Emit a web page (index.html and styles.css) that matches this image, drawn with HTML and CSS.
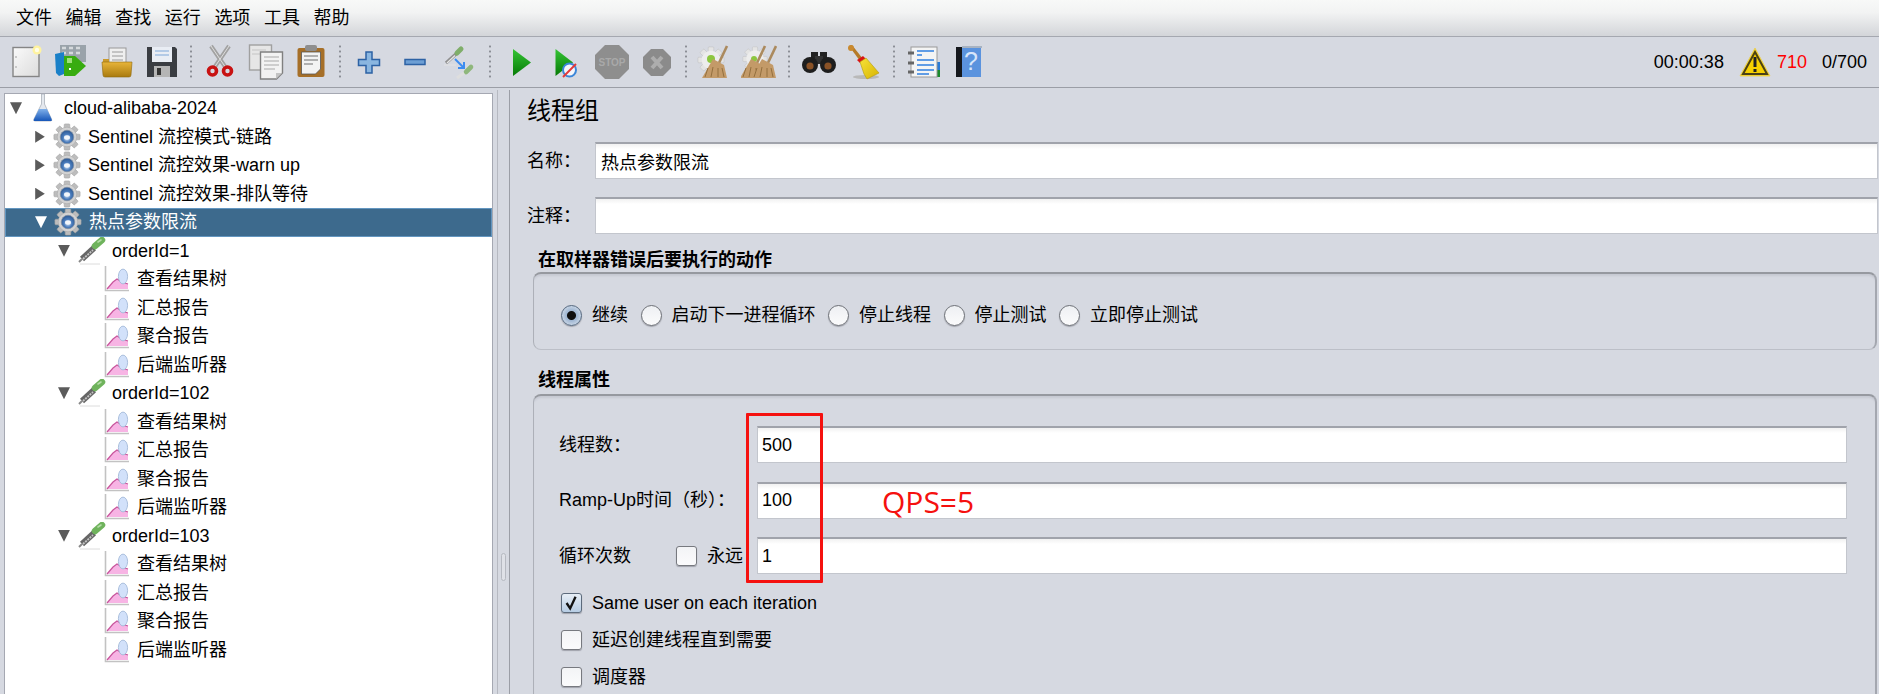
FILE: index.html
```html
<!DOCTYPE html>
<html lang="zh-CN">
<head>
  <meta charset="UTF-8">
  <title>JMeter - cloud-alibaba-2024</title>
  <link rel="stylesheet" href="styles.css">
</head>
<body>
  <!-- shared icons -->
  <svg class="icon-defs" aria-hidden="true">
    <defs>
      <linearGradient id="paper" x1="0" y1="0" x2="1" y2="1"><stop offset="0" stop-color="#fafafa"/><stop offset="1" stop-color="#dcdcdc"/></linearGradient>
      <linearGradient id="folder" x1="0" y1="0" x2="0" y2="1"><stop offset="0" stop-color="#e8b53a"/><stop offset="1" stop-color="#a97a0e"/></linearGradient>
      <linearGradient id="go" x1="0" y1="0" x2="0" y2="1"><stop offset="0" stop-color="#35c435"/><stop offset="1" stop-color="#067a06"/></linearGradient>
      <linearGradient id="liquid" x1="0" y1="0" x2="0" y2="1"><stop offset="0" stop-color="#7fb0ea"/><stop offset="1" stop-color="#1656b8"/></linearGradient>
      <radialGradient id="ball" cx="0.5" cy="0.6" r="0.6"><stop offset="0" stop-color="#d8e6f8"/><stop offset="0.5" stop-color="#4a7cbc"/><stop offset="1" stop-color="#2a5690"/></radialGradient>
      <linearGradient id="yellow" x1="0" y1="0" x2="1" y2="1"><stop offset="0" stop-color="#f6e23a"/><stop offset="1" stop-color="#d8b400"/></linearGradient>

      <symbol id="i-gear" viewBox="0 0 30 30">
        <g fill="#bdbdbd" stroke="#a2a2a2" stroke-width="0.6">
          <rect x="12" y="1" width="6" height="28" rx="1"/>
          <rect x="12" y="1" width="6" height="28" rx="1" transform="rotate(45 15 15)"/>
          <rect x="12" y="1" width="6" height="28" rx="1" transform="rotate(90 15 15)"/>
          <rect x="12" y="1" width="6" height="28" rx="1" transform="rotate(135 15 15)"/>
        </g>
        <circle cx="15" cy="15" r="10.5" fill="#d2d2d2" stroke="#a8a8a8" stroke-width="0.6"/>
        <circle cx="15" cy="15" r="7.2" fill="url(#ball)" stroke="#7d8ba0" stroke-width="0.8"/>
        <ellipse cx="15" cy="15.5" rx="3.2" ry="2.4" fill="#f2f6fb"/>
      </symbol>
      <symbol id="i-dropper" viewBox="0 0 30 28">
        <path d="M4 27h20" stroke="#dcdcdc" stroke-width="1"/>
        <path d="M3 25l3-3" stroke="#888" stroke-width="2"/>
        <path d="M6 22L18 11" stroke="#666" stroke-width="6"/>
        <path d="M7 22L17 13" stroke="#c4c4c4" stroke-width="1.8" stroke-dasharray="2 1"/>
        <path d="M19 9l7-6" stroke="#6fb35c" stroke-width="6.5" stroke-linecap="round"/>
        <path d="M22 5l3-2" stroke="#b5dca8" stroke-width="1.6" stroke-linecap="round"/>
      </symbol>
      <symbol id="i-chart" viewBox="0 0 30 28">
        <path d="M4.500 1v24.500H28" fill="none" stroke="#c2c2c2" stroke-width="1.6"/>
        <path d="M6 24l6-7 4-3 5 3 6 2v5z" fill="#f7b4e4"/>
        <path d="M6 24l6-7 4-3 5 3 6 2" fill="none" stroke="#c8559c" stroke-width="1.2"/>
        <ellipse cx="22" cy="11.500" rx="4.600" ry="7.400" fill="#d2e1fa" stroke="#9db4d4" stroke-width="0.8"/>
      </symbol>
      <symbol id="i-broom" viewBox="0 0 36 36">
        <path d="M31 2L22 21" stroke="#ab8a5e" stroke-width="2.6"/>
        <path d="M17 15l11 6 3 13H6z" fill="#c39a68"/>
        <path d="M12 24l-3 9M17 23l-2 10M22 24l0 9M26 24l2 9" stroke="#94703f" stroke-width="1"/>
      </symbol>
      <symbol id="i-cleargear" viewBox="0 0 30 30">
        <g fill="#e4e4e4" stroke="#bcbcbc" stroke-width="0.5">
          <rect x="12" y="1" width="6" height="28" rx="1"/>
          <rect x="12" y="1" width="6" height="28" rx="1" transform="rotate(45 15 15)"/>
          <rect x="12" y="1" width="6" height="28" rx="1" transform="rotate(90 15 15)"/>
          <rect x="12" y="1" width="6" height="28" rx="1" transform="rotate(135 15 15)"/>
        </g>
        <circle cx="15" cy="15" r="10" fill="#ededed"/>
      </symbol>
    </defs>
  </svg>

  <nav class="menubar">
    <span class="menu-item">文件</span>
    <span class="menu-item">编辑</span>
    <span class="menu-item">查找</span>
    <span class="menu-item">运行</span>
    <span class="menu-item">选项</span>
    <span class="menu-item">工具</span>
    <span class="menu-item">帮助</span>
  </nav>

  <div class="toolbar">
    <span class="tool"><svg viewBox="0 0 36 36"><rect x="5" y="3.5" width="26" height="29" fill="url(#paper)" stroke="#858585" stroke-width="1.4"/><circle cx="8" cy="13" r="1" fill="#bbb"/><circle cx="8" cy="23" r="1" fill="#bbb"/><circle cx="29" cy="6" r="4.5" fill="#fff3a0"/><circle cx="29" cy="6" r="2.2" fill="#fffde8"/></svg></span>
    <span class="tool"><svg viewBox="0 0 36 36"><rect x="7" y="1" width="26" height="17" fill="#9aa3aa"/><path d="M9 4h4M16 4h4M23 4h4M9 9h4M16 9h4M23 9h4" stroke="#d5d9dc" stroke-width="2.4"/><path d="M2 10l9-2v22l-5 2-3-3z" fill="#1a80c8"/><path d="M11 12h11l11 10-11 10H11z" fill="#38ac10"/><rect x="14" y="14" width="5" height="5" fill="#9fe07a"/><path d="M16 25h2" stroke="#fff" stroke-width="2"/></svg></span>
    <span class="tool"><svg viewBox="0 0 36 36"><rect x="10" y="4" width="17" height="18" fill="#efefef" stroke="#999"/><path d="M13 8h11M13 12h11M13 16h11" stroke="#9a9a9a"/><path d="M4 15h6v4H4z" fill="#c99a2c"/><path d="M3 18h30l-1 13q0 2-2 2H6q-2 0-2-2z" fill="url(#folder)" stroke="#8f680c" stroke-width="0.6"/></svg></span>
    <span class="tool"><svg viewBox="0 0 36 36"><path d="M3 3h28l2 2v28H3z" fill="#3a3d42"/><rect x="8" y="3" width="20" height="15" fill="#e9edf4"/><path d="M11 7h14M11 11h14" stroke="#7ea7d8" stroke-width="1.2"/><rect x="10" y="22" width="16" height="11" fill="#b5b5b5"/><rect x="13" y="24" width="4" height="7" fill="#333"/></svg></span>
    <span class="tool-sep"></span>
    <span class="tool"><svg viewBox="0 0 36 36"><path d="M9 2l15 22M27 2L12 24" stroke="#a2a2a2" stroke-width="4.2"/><path d="M9 2l15 22M27 2L12 24" stroke="#dedede" stroke-width="1"/><circle cx="10.5" cy="27" r="4" fill="none" stroke="#c81212" stroke-width="3.6"/><circle cx="25.5" cy="27" r="4" fill="none" stroke="#c81212" stroke-width="3.6"/></svg></span>
    <span class="tool"><svg viewBox="0 0 36 36"><rect x="1.5" y="1" width="22" height="25" fill="#e6e6e6" stroke="#a0a0a0" stroke-width="1.4"/><path d="M4 6h14M4 10h8" stroke="#c4c4c4"/><path d="M12.5 8h22v21l-6 6h-16z" fill="#f2f2f2" stroke="#808080" stroke-width="1.4"/><path d="M16 13h15M16 17h15M16 21h15M16 25h11" stroke="#a8a8a8"/><path d="M28 35v-6h6z" fill="#c4c4c4"/></svg></span>
    <span class="tool"><svg viewBox="0 0 36 36"><rect x="4.5" y="4" width="27" height="29" rx="2" fill="#a66f28"/><path d="M8.5 8h19v17l-5 5h-14z" fill="#f3f3f3" stroke="#555" stroke-width="0.8"/><rect x="12" y="1" width="12" height="6" rx="2" fill="#8e8e8e"/><path d="M11 12h14M11 16h14M11 20h9" stroke="#9a9a9a" stroke-width="1.5"/></svg></span>
    <span class="tool-sep"></span>
    <span class="tool"><svg viewBox="0 0 36 36"><path d="M15 8h6v7.5h7.5v6H21V29h-6v-7.5H7.5v-6H15z" fill="#8ab6e0" stroke="#2d62a4" stroke-width="1.5"/></svg></span>
    <span class="tool"><svg viewBox="0 0 36 36"><rect x="8" y="15.5" width="20" height="5" fill="#6d9fd4" stroke="#2d62a4" stroke-width="1.5"/></svg></span>
    <span class="tool"><svg viewBox="0 0 36 36"><path d="M4 19L14 10" stroke="#8f8f8f" stroke-width="3.4"/><path d="M5 19L13 11.5" stroke="#e8e8e8" stroke-width="1.2"/><path d="M15 9l4-4" stroke="#7fae6a" stroke-width="5" stroke-linecap="round"/><path d="M2 21h12" stroke="#e3e3e3"/><path d="M13 15l8 8" stroke="#3c8cf0" stroke-width="2"/><path d="M22 18v6h-6" fill="none" stroke="#3c8cf0" stroke-width="2"/><path d="M24 28l5-5" stroke="#8fb77c" stroke-width="4.6" stroke-linecap="round"/><path d="M15 34l7-5" stroke="#dedede" stroke-width="3"/></svg></span>
    <span class="tool-sep sep-run"></span>
    <span class="tool"><svg viewBox="0 0 36 36"><path d="M10 5l18 13.5L10 32z" fill="url(#go)"/></svg></span>
    <span class="tool"><svg viewBox="0 0 36 36"><path d="M7.5 5L25 18.5 7.5 32z" fill="url(#go)"/><circle cx="21.5" cy="26" r="6.5" fill="#f4f6fa" stroke="#3c86d8" stroke-width="2"/><path d="M15 33l13-13" stroke="#e23a3a" stroke-width="2"/></svg></span>
    <span class="tool"><svg viewBox="0 0 36 36"><path d="M11 1h14l10 10v14L25 35H11L1 25V11z" fill="#8e8e8e"/><text class="stop-text" x="18" y="22">STOP</text></svg></span>
    <span class="tool"><svg viewBox="0 0 36 36"><path d="M12 5h12l8 8v11l-8 8H12l-8-8V13z" fill="#8b8b8b"/><path d="M13 13l10 11M23 13L13 24" stroke="#adadad" stroke-width="4"/></svg></span>
    <span class="tool-sep sep-narrow"></span>
    <span class="tool"><svg viewBox="0 0 36 36"><use href="#i-cleargear" width="28" height="28" x="1" y="2"/><circle cx="15" cy="15" r="4" fill="#8cc63f"/><use href="#i-broom"/></svg></span>
    <span class="tool"><svg viewBox="0 0 36 36"><use href="#i-cleargear" width="26" height="26" x="1" y="2"/><circle cx="13" cy="15" r="3" fill="#8cc63f"/><use href="#i-broom" x="-7"/><use href="#i-broom" x="4"/></svg></span>
    <span class="tool-sep tool-sep-wide"></span>
    <span class="tool"><svg viewBox="0 0 36 36"><rect x="10" y="8" width="7" height="8" fill="#222"/><rect x="19" y="8" width="7" height="8" fill="#222"/><rect x="14" y="12" width="8" height="8" fill="#333"/><circle cx="9" cy="21" r="8" fill="#1e1e1e"/><circle cx="27" cy="21" r="8" fill="#1e1e1e"/><circle cx="9" cy="22" r="3.6" fill="#8a5226"/><circle cx="27" cy="22" r="3.6" fill="#8a5226"/></svg></span>
    <span class="tool"><svg viewBox="0 0 36 36"><ellipse cx="20" cy="33" rx="13" ry="2" fill="#b9b9b9"/><path d="M3 2l3-1 11 14-3 2z" fill="#b57a28"/><circle cx="5" cy="4" r="3" fill="#c98a30"/><path d="M11 16l6-4 3 3-6 4z" fill="#d81414"/><path d="M14 18l6-4 13 15-12 6-3-5z" fill="url(#yellow)" stroke="#b39a10" stroke-width="0.6"/></svg></span>
    <span class="tool-sep tool-sep-wide"></span>
    <span class="tool"><svg viewBox="0 0 36 36"><rect x="31" y="18" width="3" height="8" fill="#2b7bd6"/><rect x="31" y="26" width="3" height="7" fill="#1c8a2c"/><rect x="5" y="3" width="26" height="30" fill="#f4f4f4" stroke="#9a9a9a"/><path d="M2 9h6M2 19h6M2 28h6" stroke="#666" stroke-width="3"/><path d="M11 7h17M11 11h5M11 16h17M11 21h17M11 26h17M11 30h12" stroke="#2f7fe0" stroke-width="1.3"/></svg></span>
    <span class="tool"><svg viewBox="0 0 36 36"><rect x="5" y="3" width="25" height="30" fill="#5b93de"/><rect x="5" y="3" width="6" height="30" fill="#15181d"/><rect x="11" y="2" width="20" height="2" fill="#a8b3c2"/><text class="help-text" x="20" y="26">?</text></svg></span>
    <div class="status">
      <span class="status-time">00:00:38</span>
      <svg class="warn-icon" viewBox="0 0 32 30"><path d="M16 1L31 29H1z" fill="#f6d000" stroke="#e8d060" stroke-width="1"/><path d="M16 5L28 27H4z" fill="none" stroke="#4a4116" stroke-width="2"/><path d="M16 10v10" stroke="#222" stroke-width="3"/><path d="M16 22v3" stroke="#222" stroke-width="3"/></svg>
      <span class="status-errors">710</span>
      <span class="status-threads">0/700</span>
    </div>
  </div>

  <div class="main">
    <div class="tree-pane">
      <div class="tree-row depth-0"><span class="twist open"></span><svg class="node-icon" viewBox="0 0 30 28"><path d="M13.5 0h3v10l7 15q1 2-1 2H7q-2 0-1-2l7.5-15z" fill="#e4e8ee" stroke="#a0a8b2" stroke-width="0.7"/><path d="M11 15h8l4.500 10q1 2-1 2H7q-2 0-1-2z" fill="url(#liquid)"/></svg><span class="node-label">cloud-alibaba-2024</span></div>

      <div class="tree-row depth-1"><span class="twist closed"></span><svg class="node-icon"><use href="#i-gear"/></svg><span class="node-label">Sentinel 流控模式-链路</span></div>
      <div class="tree-row depth-1"><span class="twist closed"></span><svg class="node-icon"><use href="#i-gear"/></svg><span class="node-label">Sentinel 流控效果-warn up</span></div>
      <div class="tree-row depth-1"><span class="twist closed"></span><svg class="node-icon"><use href="#i-gear"/></svg><span class="node-label">Sentinel 流控效果-排队等待</span></div>
      <div class="tree-row depth-1 selected"><span class="twist open"></span><svg class="node-icon"><use href="#i-gear"/></svg><span class="node-label">热点参数限流</span></div>

      <div class="tree-row depth-2"><span class="twist open"></span><svg class="node-icon"><use href="#i-dropper"/></svg><span class="node-label">orderId=1</span></div>
      <div class="tree-row leaf"><svg class="node-icon"><use href="#i-chart"/></svg><span class="node-label">查看结果树</span></div>
      <div class="tree-row leaf"><svg class="node-icon"><use href="#i-chart"/></svg><span class="node-label">汇总报告</span></div>
      <div class="tree-row leaf"><svg class="node-icon"><use href="#i-chart"/></svg><span class="node-label">聚合报告</span></div>
      <div class="tree-row leaf"><svg class="node-icon"><use href="#i-chart"/></svg><span class="node-label">后端监听器</span></div>

      <div class="tree-row depth-2"><span class="twist open"></span><svg class="node-icon"><use href="#i-dropper"/></svg><span class="node-label">orderId=102</span></div>
      <div class="tree-row leaf"><svg class="node-icon"><use href="#i-chart"/></svg><span class="node-label">查看结果树</span></div>
      <div class="tree-row leaf"><svg class="node-icon"><use href="#i-chart"/></svg><span class="node-label">汇总报告</span></div>
      <div class="tree-row leaf"><svg class="node-icon"><use href="#i-chart"/></svg><span class="node-label">聚合报告</span></div>
      <div class="tree-row leaf"><svg class="node-icon"><use href="#i-chart"/></svg><span class="node-label">后端监听器</span></div>

      <div class="tree-row depth-2"><span class="twist open"></span><svg class="node-icon"><use href="#i-dropper"/></svg><span class="node-label">orderId=103</span></div>
      <div class="tree-row leaf"><svg class="node-icon"><use href="#i-chart"/></svg><span class="node-label">查看结果树</span></div>
      <div class="tree-row leaf"><svg class="node-icon"><use href="#i-chart"/></svg><span class="node-label">汇总报告</span></div>
      <div class="tree-row leaf"><svg class="node-icon"><use href="#i-chart"/></svg><span class="node-label">聚合报告</span></div>
      <div class="tree-row leaf"><svg class="node-icon"><use href="#i-chart"/></svg><span class="node-label">后端监听器</span></div>
    </div>

    <div class="splitter"><span class="splitter-grip"></span></div>

    <div class="detail">
      <h1 class="detail-title">线程组</h1>

      <div class="name-row">
        <label class="name-label">名称：</label>
        <input class="field" type="text" value="热点参数限流">
      </div>
      <div class="name-row">
        <label class="name-label">注释：</label>
        <input class="field" type="text" value="">
      </div>

      <h2 class="group-title">在取样器错误后要执行的动作</h2>
      <div class="group-box action-box">
        <span class="radio checked"></span><span class="option-label">继续</span>
        <span class="radio"></span><span class="option-label">启动下一进程循环</span>
        <span class="radio"></span><span class="option-label">停止线程</span>
        <span class="radio"></span><span class="option-label">停止测试</span>
        <span class="radio"></span><span class="option-label">立即停止测试</span>
      </div>

      <h2 class="group-title group-title-props">线程属性</h2>
      <div class="group-box props-box">
        <div class="prop-row">
          <label class="prop-label">线程数：</label>
          <input class="field num-field" type="text" value="500">
        </div>
        <div class="prop-row">
          <label class="prop-label">Ramp-Up时间（秒）：</label>
          <input class="field num-field" type="text" value="100">
        </div>
        <div class="prop-row loop-row">
          <div class="prop-label loop-label">
            <span class="loop-text">循环次数</span>
            <span class="check"></span><span class="option-label">永远</span>
          </div>
          <input class="field num-field" type="text" value="1">
        </div>

        <div class="check-row">
          <span class="check checked"><svg viewBox="0 0 21 20"><path d="M5 10l4 6 6-13" fill="none" stroke="#111" stroke-width="2.6"/></svg></span>
          <span class="option-label">Same user on each iteration</span>
        </div>
        <div class="check-row">
          <span class="check"></span><span class="option-label">延迟创建线程直到需要</span>
        </div>
        <div class="check-row">
          <span class="check"></span><span class="option-label">调度器</span>
        </div>

        <!-- red markup drawn over the form -->
        <div class="markup-box"></div>
        <div class="markup-text">QPS=5</div>
      </div>
    </div>
  </div>
</body>
</html>
```

FILE: styles.css
```css
* {
  box-sizing: border-box;
}
html, body {
  height: 100%;
}
body {
  margin: 0;
  overflow: hidden;
  background: #d6d9e1;
  color: #000;
  font-family: "Liberation Sans", "Noto Sans CJK SC", sans-serif;
  font-size: 18px;
  line-height: 20px;
}
.icon-defs {
  position: absolute;
  width: 0;
  height: 0;
}

/* menu */
.menubar {
  display: flex;
  align-items: center;
  gap: 13.6px;
  height: 37px;
  padding-left: 16px;
  background: linear-gradient(#f8f9f8 0, #f2f3f3 35%, #d3d5d9 100%);
  border-bottom: 1px solid #a5a8b0;
}

/* toolbar */
.toolbar {
  display: flex;
  align-items: center;
  height: 51px;
  padding-left: 3px;
  border-bottom: 1px solid #9b9ea6;
}
.tool {
  display: flex;
  justify-content: center;
  width: 45.5px;
}
.tool svg {
  width: 36px;
  height: 36px;
}
.stop-text {
  font-size: 10px;
  font-weight: bold;
  fill: #a9a9a9;
  text-anchor: middle;
}
.help-text {
  font-size: 25px;
  fill: #d8e6fa;
  text-anchor: middle;
}
.tool-sep {
  width: 12.5px;
  height: 36px;
  background: radial-gradient(circle, #8b8e96 1px, transparent 1.2px) center top / 2px 5px repeat-y;
}
.sep-run {
  width: 15px;
  background-position: 6px 0;
}
.sep-narrow {
  width: 11px;
}
.tool-sep-wide {
  width: 14px;
}
.status {
  display: flex;
  align-items: center;
  margin-left: auto;
  padding-right: 12px;
}
.warn-icon {
  width: 32px;
  height: 30px;
  margin: 0 6px 0 15px;
}
.status-errors {
  color: #f00;
  margin-right: 15px;
}

/* layout below the toolbar */
.main {
  display: flex;
  height: 606px;
}

/* test plan tree */
.tree-pane {
  width: 489px;
  height: 601px;
  margin: 5px 0 0 4px;
  background: #fff;
  border: 1px solid #a5a8b2;
  border-bottom: none;
  flex-shrink: 0;
}
.tree-row {
  display: flex;
  align-items: center;
  height: 28.5px;
  white-space: nowrap;
}
.depth-0 { padding-left: 5px; }
.depth-1 { padding-left: 29px; }
.depth-2 { padding-left: 53px; }
.leaf { padding-left: 90px; }
.twist {
  display: block;
  width: 12px;
  height: 12px;
}
.twist.open {
  background: #5b5b5b;
  clip-path: polygon(0 0, 100% 0, 50% 100%);
}
.twist.closed {
  background: #5b5b5b;
  clip-path: polygon(10% 0, 90% 50%, 10% 100%);
}
.node-icon {
  width: 30px;
  height: 28px;
  margin: 0 6px;
  flex-shrink: 0;
}
.tree-row.selected {
  background: #3d6a8d;
  border: 1px solid #6396c0;
  color: #fff;
}
.tree-row.selected .twist.open {
  background: #fff;
}

/* divider between tree and detail */
.splitter {
  display: flex;
  justify-content: center;
  width: 13px;
  height: 604px;
  margin: 2px 0 0 4px;
  padding-top: 463px;
  border-left: 1px solid #b6b9c1;
  border-right: 1px solid #9b9ea6;
  flex-shrink: 0;
}
.splitter-grip {
  width: 5px;
  height: 28px;
  border: 1px solid #b6b9c1;
  border-radius: 3px;
  background: #dfe1e7;
}

/* thread group form */
.detail {
  flex: 1;
  min-width: 0;
  padding: 8px 1px 0 17px;
}
.detail-title {
  margin: 0 0 16px;
  font-size: 24px;
  font-weight: normal;
  line-height: 30px;
}
.name-row {
  display: flex;
  align-items: center;
  height: 37px;
  margin-bottom: 18px;
}
.name-label {
  width: 68px;
  flex-shrink: 0;
}
.field {
  flex: 1;
  min-width: 0;
  height: 100%;
  padding: 0 0 0 5px;
  background: linear-gradient(#f1f1f1 0, #fff 5px);
  border: 1px solid #c3c6cd;
  border-top: 2px solid #a0a3ab;
  border-radius: 0;
  outline: none;
  color: #000;
  font: inherit;
}
.num-field {
  padding-left: 4px;
}
.group-title {
  margin: -4px 0 0 11px;
  font-size: 18px;
  font-weight: bold;
  line-height: 24px;
}
.group-title-props {
  margin: 18px 0 2px 11px;
}
.group-box {
  margin: 0 1px 0 6px;
  border: 1px solid #adb0b8;
  border-top: 2px solid #96999f;
  border-right: 2px solid #a4a7af;
  border-radius: 8px;
  box-shadow: inset 0 3px 2px -1px rgba(90, 94, 104, 0.12);
}
.action-box {
  display: flex;
  align-items: center;
  height: 78px;
  padding: 7px 0 0 27px;
  border-bottom-color: #bcbfc7;
}
.option-label {
  margin-left: 10px;
  margin-right: 12.5px;
  white-space: nowrap;
}
.radio {
  display: block;
  width: 21px;
  height: 21px;
  border: 1px solid #6f7278;
  border-radius: 50%;
  background: linear-gradient(#eef0f3, #fbfbfc);
  box-shadow: 0 1px 1px rgba(80, 80, 90, 0.4);
  flex-shrink: 0;
}
.radio.checked {
  border-color: #55687f;
  background: radial-gradient(circle, #0f0f0f 0 4px, #9fb6d2 5px, #e7edf4 100%);
}
.props-box {
  position: relative;
  height: 320px;
  padding: 30px 28px 0 25px;
  border-bottom: none;
  border-radius: 8px 8px 0 0;
}
.prop-row {
  display: flex;
  align-items: center;
  height: 37px;
  margin-bottom: 18.5px;
}
.loop-row {
  margin-bottom: 10.5px;
}
.prop-label {
  width: 198px;
  flex-shrink: 0;
  white-space: nowrap;
}
.loop-label {
  display: flex;
  align-items: center;
}
.loop-label .option-label {
  margin-right: 0;
}
.loop-text {
  width: 117px;
}
.check {
  display: block;
  width: 21px;
  height: 20px;
  border: 1px solid #77797f;
  border-radius: 3px;
  background: linear-gradient(#f3f4f6, #fbfbfc);
  box-shadow: 0 1px 1px rgba(80, 80, 90, 0.4);
  flex-shrink: 0;
}
.check.checked {
  background: linear-gradient(#e7eef6, #b7cde4);
  border-color: #5d6b7c;
}
.check svg {
  display: block;
  width: 100%;
  height: 100%;
}
.check-row {
  display: flex;
  align-items: center;
  height: 37px;
  padding-left: 2px;
}

/* red annotation */
.markup-box {
  position: absolute;
  left: 212px;
  top: 17px;
  width: 77px;
  height: 170px;
  border: 3px solid #f5110f;
  border-radius: 1px;
}
.markup-text {
  position: absolute;
  left: 348px;
  top: 86px;
  color: #f5110f;
  font-family: "Open Sans", sans-serif;
  font-size: 30px;
  line-height: 40px;
}
```
